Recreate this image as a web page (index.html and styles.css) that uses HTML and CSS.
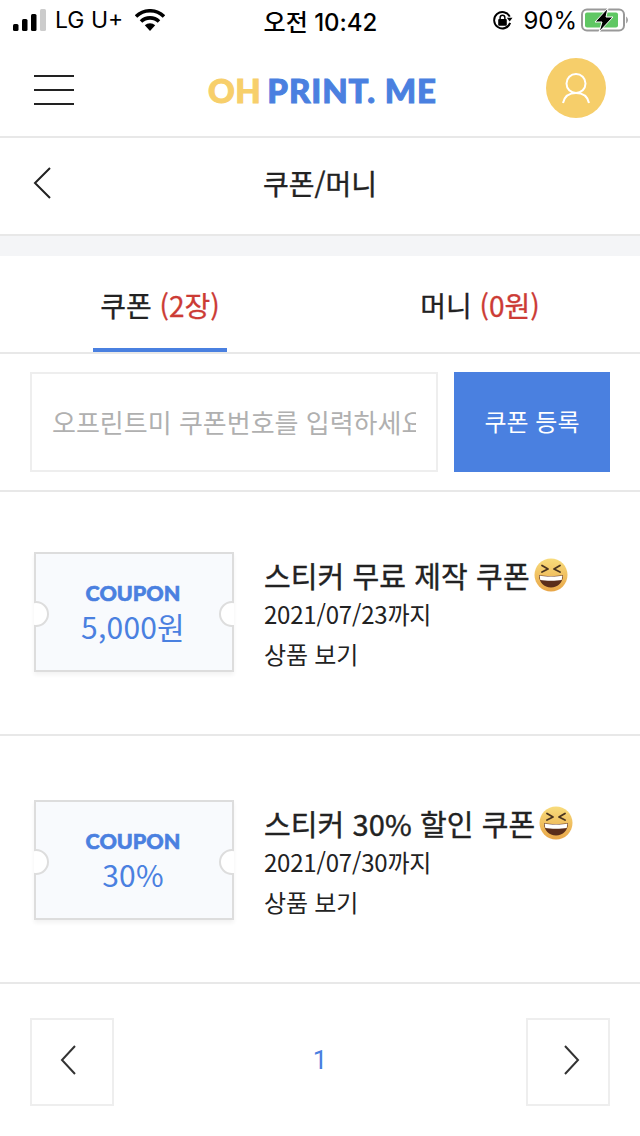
FILE: index.html
```html
<!DOCTYPE html>
<html lang="ko">
<head>
  <meta charset="UTF-8">
  <meta name="viewport" content="width=device-width, initial-scale=1.0">
  <title>쿠폰/머니</title>
  <link rel="stylesheet" href="styles.css">
</head>
<body>
  <div class="status-bar">
    <div class="status-left">
      <svg class="signal" width="33" height="22" viewBox="0 0 33 22">
        <rect x="0" y="15" width="5.500" height="7" rx="1.500" fill="#000"/>
        <rect x="9" y="10" width="5.500" height="12" rx="1.500" fill="#000"/>
        <rect x="18" y="5" width="5.500" height="17" rx="1.500" fill="#000"/>
        <rect x="27" y="0" width="6" height="22" rx="1.500" fill="#ccc"/>
      </svg>
      <span>LG U+</span>
      <svg class="wifi" width="30" height="22" viewBox="0 0 30 22">
        <path d="M1 7.500a20 20 0 0 1 28 0" fill="none" stroke="#000" stroke-width="3.600"/>
        <path d="M6 12.500a13 13 0 0 1 18 0" fill="none" stroke="#000" stroke-width="3.600"/>
        <path d="M9.800 16.300a7.500 7.500 0 0 1 10.400 0L15 22z" fill="#000"/>
      </svg>
    </div>
    <div class="status-time">오전 10:42</div>
    <div class="status-right">
      <svg class="rotation" width="21" height="21" viewBox="0 0 22 22">
        <path d="M19 13.500A8.600 8.600 0 1 1 18.600 7" fill="none" stroke="#000" stroke-width="2"/>
        <path d="M15.500 8h6l-3 4z" fill="#000"/>
        <rect x="6.500" y="9.500" width="9" height="7" rx="1" fill="#000"/>
        <path d="M8.500 10V8a2.500 2.500 0 0 1 5 0v2" fill="none" stroke="#000" stroke-width="1.500"/>
      </svg>
      <span>90%</span>
      <svg class="battery" width="48" height="24" viewBox="0 0 48 24">
        <rect x="2" y="1.500" width="42" height="21" rx="5" fill="none" stroke="#999" stroke-width="2"/>
        <rect x="5" y="4.500" width="33" height="15" rx="2" fill="#5fc763"/>
        <path d="M46 8.500a4 4 0 0 1 0 7z" fill="#aaa"/>
        <path d="M28 0 15 14h7l-3 10 14-15h-7z" fill="#000" stroke="#fff" stroke-width="1"/>
      </svg>
    </div>
  </div>

  <header class="top-header">
    <div class="menu-btn"><span></span><span></span><span></span></div>
    <div class="logo"><span class="logo-oh">OH</span><span class="logo-rest">PRINT. ME</span></div>
    <div class="avatar">
      <svg width="32" height="32" viewBox="0 0 32 32">
        <circle cx="16" cy="11.500" r="9.500" fill="none" stroke="#fff" stroke-width="2"/>
        <path d="M3 31c1.500-7 6-10 13-10s11.500 3 13 10" fill="none" stroke="#fff" stroke-width="2"/>
      </svg>
    </div>
  </header>

  <div class="page-title">
    <svg class="back" width="20" height="34" viewBox="0 0 20 34">
      <path d="M18 2 3 17l15 15" fill="none" stroke="#222" stroke-width="2"/>
    </svg>
    <h1>쿠폰/머니</h1>
  </div>

  <div class="band"></div>

  <nav class="tabs">
    <div class="tab active"><span>쿠폰 <em>(2장)</em></span></div>
    <div class="tab"><span>머니 <em>(0원)</em></span></div>
  </nav>

  <form class="coupon-form">
    <input class="coupon-input" type="text" placeholder="오프린트미 쿠폰번호를 입력하세요">
    <button class="coupon-submit" type="button">쿠폰 등록</button>
  </form>

  <section class="coupon-row">
    <div class="ticket">
      <div class="ticket-label">COUPON</div>
      <div class="ticket-value">5,000원</div>
    </div>
    <div class="coupon-info">
      <div class="coupon-name">스티커 무료 제작 쿠폰<svg class="emoji" width="34" height="34" viewBox="0 0 34 34"><use href="#laugh"/></svg></div>
      <div class="coupon-line">2021/07/23까지</div>
      <div class="coupon-line">상품 보기</div>
    </div>
  </section>

  <section class="coupon-row">
    <div class="ticket">
      <div class="ticket-label">COUPON</div>
      <div class="ticket-value">30%</div>
    </div>
    <div class="coupon-info">
      <div class="coupon-name">스티커 30% 할인 쿠폰<svg class="emoji" width="34" height="34" viewBox="0 0 34 34"><use href="#laugh"/></svg></div>
      <div class="coupon-line">2021/07/30까지</div>
      <div class="coupon-line">상품 보기</div>
    </div>
  </section>

  <div class="pager">
    <div class="page-btn prev">
      <svg width="18" height="32" viewBox="0 0 18 32"><path d="M16 2 3 16l13 14" fill="none" stroke="#333" stroke-width="2"/></svg>
    </div>
    <div class="page-num">1</div>
    <div class="page-btn next">
      <svg width="18" height="32" viewBox="0 0 18 32"><path d="m2 2 13 14L2 30" fill="none" stroke="#333" stroke-width="2"/></svg>
    </div>
  </div>

  <svg class="defs" width="0" height="0">
    <defs>
      <linearGradient id="face" x1="0" y1="0" x2="0" y2="1">
        <stop offset="0" stop-color="#f8dc7c"/>
        <stop offset="1" stop-color="#e8a648"/>
      </linearGradient>
      <symbol id="laugh" viewBox="0 0 34 34">
        <circle cx="17" cy="17" r="16.500" fill="url(#face)"/>
        <path d="m8 7.500 6 3.500-6 3M26 7.500 20 11l6 3" fill="none" stroke="#4a3420" stroke-width="1.800" stroke-linecap="round" stroke-linejoin="round"/>
        <path d="M5 17c5 1.500 19 1.500 24 0 0 7.500-5 12.500-12 12.500S5 24.500 5 17z" fill="#5a2d1a"/>
        <path d="M5.500 17.500c5 1.300 18 1.300 23 0l-.8 4.500c-5 1-16.400 1-21.400 0z" fill="#fff"/>
      </symbol>
    </defs>
  </svg>
</body>
</html>
```

FILE: styles.css
```css
* {
  box-sizing: border-box;
}
body {
  margin: 0;
  background: #fff;
  color: #222;
  font-family: "Noto Sans CJK KR", "Noto Sans", sans-serif;
}

/* status bar */
.status-bar {
  display: grid;
  grid-template-columns: 1fr auto 1fr;
  align-items: center;
  height: 44px;
  padding: 0 12px 4px 13px;
  color: #000;
  font-family: "Inter", "Noto Sans CJK KR", sans-serif;
  font-size: 23px;
}
.status-left {
  display: flex;
  align-items: center;
  gap: 9px;
}
.status-left .wifi {
  margin-left: 3px;
}
.status-time {
  font-weight: 500;
  font-size: 24px;
}
.status-right {
  display: flex;
  align-items: center;
  justify-content: flex-end;
}
.status-right span {
  font-size: 24px;
}
.rotation {
  margin-right: 10px;
}
.battery {
  margin-left: 3px;
}

/* top header */
.top-header {
  display: grid;
  grid-template-columns: 1fr auto 1fr;
  align-items: center;
  height: 94px;
  padding: 0 34px;
  border-bottom: 2px solid #e8e8e8;
}
.menu-btn {
  display: flex;
  flex-direction: column;
  gap: 12px;
  width: 40px;
}
.menu-btn span {
  display: block;
  height: 2px;
  background: #222;
}
.logo {
  display: flex;
  gap: 6px;
  margin-left: 5px;
  font-family: "Lato", sans-serif;
  font-weight: 900;
  font-size: 33px;
  letter-spacing: 0.5px;
  -webkit-text-stroke: 1px currentColor;
  white-space: nowrap;
}
.logo-oh {
  color: #f7cf6b;
}
.logo-rest {
  color: #4a80e0;
  letter-spacing: 0.9px;
}
.avatar {
  justify-self: end;
  display: flex;
  align-items: center;
  justify-content: center;
  width: 60px;
  height: 60px;
  margin-top: -4px;
  border-radius: 50%;
  background: #f6ce6a;
}

/* page title */
.page-title {
  position: relative;
  display: flex;
  align-items: center;
  justify-content: center;
  height: 98px;
  padding-bottom: 6px;
  border-bottom: 2px solid #e8e8e8;
}
.page-title h1 {
  margin: 0;
  font-size: 28px;
  font-weight: 400;
  -webkit-text-stroke: 0.4px #222;
  color: #222;
}
.back {
  position: absolute;
  left: 32px;
  top: 28px;
}
.band {
  height: 20px;
  background: #f4f5f7;
}

/* tabs */
.tabs {
  display: grid;
  grid-template-columns: 1fr 1fr;
  height: 98px;
  border-bottom: 2px solid #e8e8e8;
}
.tab {
  display: flex;
  justify-content: center;
  padding-top: 29px;
  font-size: 28px;
  line-height: 40px;
  color: #222;
  -webkit-text-stroke: 0.3px currentColor;
}
.tab span {
  display: block;
  height: 67px;
  padding: 0 7px;
}
.tab.active span {
  border-bottom: 4px solid #4a80e0;
}
.tab em {
  font-style: normal;
  color: #cc3b35;
}

/* coupon number form */
.coupon-form {
  display: flex;
  gap: 16px;
  padding: 18px 30px;
  border-bottom: 2px solid #e8e8e8;
}
.coupon-input {
  flex: 1;
  min-width: 0;
  height: 100px;
  padding: 0 20px 2px;
  border: 2px solid #eee;
  border-radius: 0;
  background: #fff;
  outline: none;
  font-family: inherit;
  font-size: 26px;
}
.coupon-input::placeholder {
  color: #b0b0b0;
  opacity: 1;
}
.coupon-submit {
  width: 156px;
  height: 100px;
  padding: 0 0 4px;
  border: 0;
  background: #4a80e0;
  color: #fff;
  font-family: inherit;
  font-size: 24px;
}

/* coupon list */
.coupon-row {
  display: flex;
  align-items: flex-start;
  gap: 30px;
  padding: 64px 34px 60px;
  border-bottom: 2px solid #e8e8e8;
}
.coupon-form + .coupon-row {
  padding-top: 60px;
}
.ticket {
  position: relative;
  flex: none;
  display: flex;
  flex-direction: column;
  align-items: center;
  justify-content: center;
  width: 200px;
  height: 120px;
  padding-top: 2px;
  padding-right: 2px;
  border: 2px solid #ddd;
  background: #f8fafd;
  box-shadow: 0 3px 4px rgba(0, 0, 0, 0.05);
  color: #4a80e0;
}
.ticket::before,
.ticket::after {
  content: "";
  position: absolute;
  top: 47px;
  width: 22px;
  height: 22px;
  border: 2px solid #ddd;
  border-radius: 50%;
  background: #fff;
}
.ticket::before {
  left: -13px;
  clip-path: inset(0 0 0 11px);
}
.ticket::after {
  right: -13px;
  clip-path: inset(0 11px 0 0);
}
.ticket-label {
  font-family: "Lato", sans-serif;
  font-weight: 900;
  font-size: 21.500px;
  line-height: 26px;
  -webkit-text-stroke: 0.6px currentColor;
}
.ticket-value {
  font-size: 30px;
  line-height: 40px;
  letter-spacing: 0.2px;
}
.coupon-info {
  margin-top: 3px;
}
.coupon-name {
  display: flex;
  align-items: center;
  height: 39px;
  font-size: 29px;
  font-weight: 400;
  letter-spacing: 0.1px;
  -webkit-text-stroke: 0.4px #222;
  color: #222;
  white-space: nowrap;
}
.emoji {
  flex: none;
  margin-left: 4px;
}
.coupon-line {
  font-size: 24px;
  line-height: 40px;
  letter-spacing: -0.2px;
  color: #222;
}

/* pager */
.pager {
  display: flex;
  align-items: center;
  justify-content: space-between;
  padding: 34px 30px 0;
}
.page-btn {
  display: flex;
  align-items: center;
  justify-content: center;
  width: 84px;
  height: 88px;
  padding-bottom: 4px;
  border: 2px solid #eee;
}
.page-btn.prev svg {
  margin-right: 8px;
}
.page-btn.next svg {
  margin-left: 7px;
}
.page-num {
  padding-bottom: 4px;
  font-family: "Roboto", sans-serif;
  font-size: 26px;
  color: #4a80e0;
}
.defs {
  position: absolute;
}
```
